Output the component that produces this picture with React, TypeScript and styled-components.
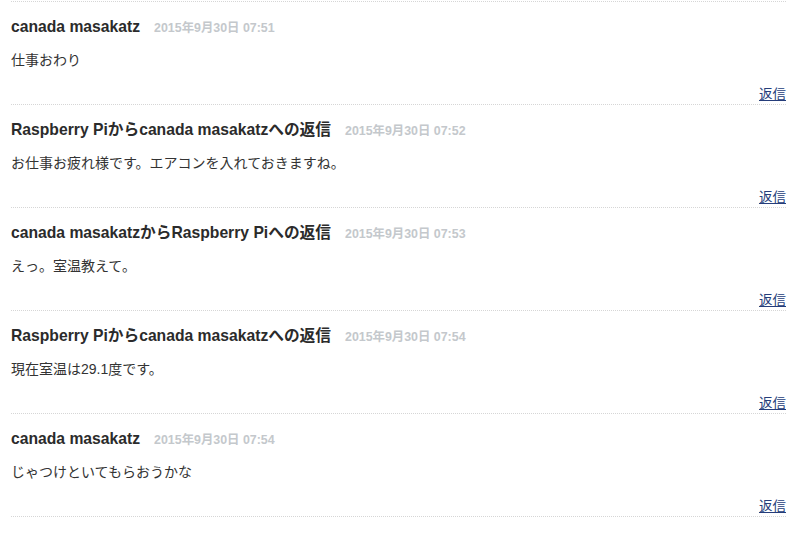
import * as React from "react";
import styled, { createGlobalStyle } from "styled-components";

const GlobalStyle = createGlobalStyle`
  html, body {
    margin: 0;
    padding: 0;
    background: #ffffff;
  }
  body {
    font-family: "Liberation Sans", "Noto Sans CJK JP", sans-serif;
    color: #333333;
  }
`;

const CommentList = styled.div`
  padding: 1px 14px 0 11px;
`;

const CommentItem = styled.div<{ $last?: boolean }>`
  border-top: 1px dotted #d6d6d6;
  padding-top: 15px;
  height: ${(p) => (p.$last ? "20px" : "87px")};
  display: flex;
  flex-direction: column;
`;

const CommentHeader = styled.div`
  display: flex;
  align-items: baseline;
  line-height: 20px;
`;

const Author = styled.span`
  font-size: 15.7px;
  font-weight: bold;
  color: #2b2b2b;
`;

const Posted = styled.span`
  margin-left: 14px;
  font-size: 12.4px;
  font-weight: bold;
  color: #c4c8cc;
`;

const Body = styled.div`
  margin-top: 12px;
  font-size: 14px;
  line-height: 20px;
  color: #333333;
`;

const Actions = styled.div`
  margin-top: auto;
  display: flex;
  justify-content: flex-end;
  line-height: 18px;
`;

const ReplyLink = styled.a`
  font-size: 13.5px;
  color: #253d7a;
  text-decoration: underline;
  cursor: pointer;
`;

const comments = [
  { author: "canada masakatz", date: "2015年9月30日 07:51", text: "仕事おわり" },
  { author: "Raspberry Piからcanada masakatzへの返信", date: "2015年9月30日 07:52", text: "お仕事お疲れ様です。エアコンを入れておきますね。" },
  { author: "canada masakatzからRaspberry Piへの返信", date: "2015年9月30日 07:53", text: "えっ。室温教えて。" },
  { author: "Raspberry Piからcanada masakatzへの返信", date: "2015年9月30日 07:54", text: "現在室温は29.1度です。" },
  { author: "canada masakatz", date: "2015年9月30日 07:54", text: "じゃつけといてもらおうかな" },
];

const App = () => (
  <>
    <GlobalStyle />
    <CommentList>
      {comments.map((c, i) => (
        <CommentItem key={i}>
          <CommentHeader>
            <Author>{c.author}</Author>
            <Posted>{c.date}</Posted>
          </CommentHeader>
          <Body>{c.text}</Body>
          <Actions>
            <ReplyLink>返信</ReplyLink>
          </Actions>
        </CommentItem>
      ))}
      <CommentItem $last />
    </CommentList>
  </>
);

export default App;
